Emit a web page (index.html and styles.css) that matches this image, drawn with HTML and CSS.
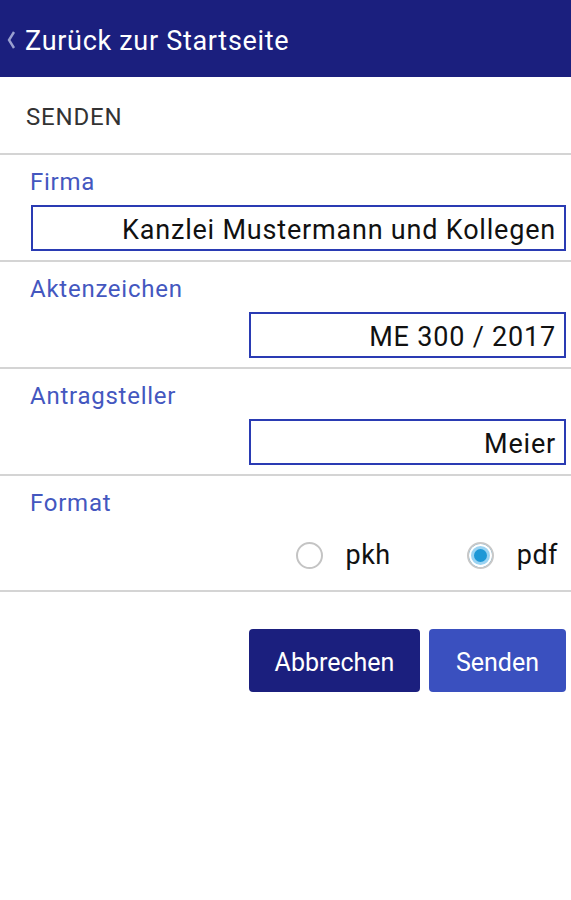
FILE: index.html
```html
<!DOCTYPE html>
<html lang="de">
<head>
<meta charset="utf-8">
<link rel="stylesheet" href="styles.css">
</head>
<body>
<header class="topbar">
  <svg class="chev" width="10" height="20" viewBox="0 0 10 20"><path d="M8 2 L3 10 L8 18" fill="none" stroke="#9aa0d0" stroke-width="2.4"/></svg>
  <span class="title">Zurück zur Startseite</span>
</header>
<div class="section-head">SENDEN</div>
<div class="field">
  <div class="label">Firma</div>
  <div class="input wide">Kanzlei Mustermann und Kollegen</div>
</div>
<div class="field">
  <div class="label">Aktenzeichen</div>
  <div class="input">ME 300 / 2017</div>
</div>
<div class="field">
  <div class="label">Antragsteller</div>
  <div class="input">Meier</div>
</div>
<div class="field format">
  <div class="label">Format</div>
  <div class="radios">
    <div class="radio"><span class="dot"></span><span>pkh</span></div>
    <div class="radio"><span class="dot on"></span><span>pdf</span></div>
  </div>
</div>
<div class="actions">
  <button class="btn dark">Abbrechen</button>
  <button class="btn light">Senden</button>
</div>
</body>
</html>
```
FILE: styles.css
```css
* { box-sizing: border-box; }
body {
  margin: 0;
  font-family: Roboto, "Noto Sans", sans-serif;
  background: #fff;
  width: 571px;
}
.topbar {
  height: 77px;
  background: #1b1f7e;
  display: flex;
  align-items: center;
  padding-left: 6px;
  color: #fff;
}
.chev { margin-right: 9px; margin-top: 2px; }
.title { font-size: 27px; letter-spacing: 0.7px; margin-top: 4px; }
.section-head {
  height: 78px;
  display: flex;
  align-items: center;
  padding-left: 26px;
  padding-top: 4px;
  font-size: 24px;
  letter-spacing: 0.8px;
  color: #333;
  border-bottom: 2px solid #d4d4d4;
}
.field {
  display: flex;
  flex-direction: column;
  align-items: flex-end;
  padding: 0 5px 9px 30px;
  border-bottom: 2px solid #d4d4d4;
}
.label {
  align-self: flex-start;
  font-size: 24px;
  letter-spacing: 0.75px;
  color: #4457bf;
  height: 50px;
  padding-top: 13px;
}
.input {
  width: 317px;
  height: 46px;
  border: 2px solid #2a3bb3;
  font-size: 27px;
  letter-spacing: 0.8px;
  color: #111;
  text-align: right;
  padding: 7px 8px 0 0;
}
.input.wide { width: 535px; }
.format { padding-bottom: 0; }
.radios {
  height: 64px;
  display: flex;
  align-items: center;
  gap: 76px;
  padding-right: 8px;
  padding-bottom: 6px;
}
.radio {
  display: flex;
  align-items: center;
  gap: 23px;
  font-size: 27px;
  letter-spacing: 0.5px;
  color: #111;
}
.dot {
  width: 27px;
  height: 27px;
  border-radius: 50%;
  border: 2px solid #c4c4c4;
  background: #fff;
  display: inline-block;
}
.dot.on {
  background: #1e98d6;
  border: 2px solid #c8c8c8;
  box-shadow: inset 0 0 0 2px #ffffff, inset 0 0 0 5px #9ad3f2;
}
.actions {
  display: flex;
  justify-content: flex-end;
  gap: 9px;
  padding: 37px 5px 0 0;
}
.btn {
  height: 63px;
  border: none;
  border-radius: 4px;
  color: #fff;
  font-family: Roboto, "Noto Sans", sans-serif;
  font-size: 25px;
  padding: 3px 0 0 0;
}
.btn.dark { width: 171px; background: #1b1f7e; }
.btn.light { width: 137px; background: #3a50bf; }
```
